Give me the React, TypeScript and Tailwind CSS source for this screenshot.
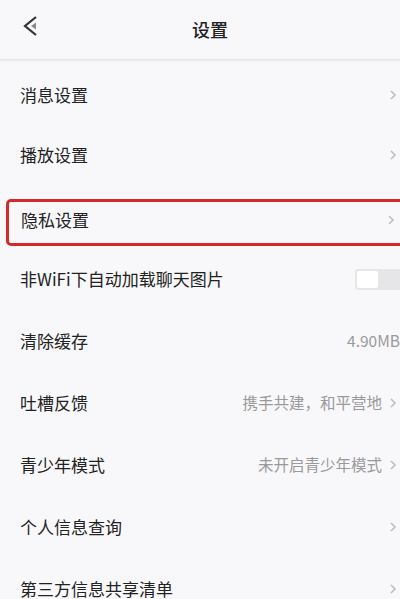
const font = { fontFamily: '"Noto Sans CJK SC", "Noto Sans", sans-serif' };

type Row = { label: string; value?: string; arrow?: boolean; toggle?: boolean; highlight?: boolean };

const rows: Row[] = [
  { label: "消息设置", arrow: true },
  { label: "播放设置", arrow: true },
  { label: "隐私设置", arrow: true, highlight: true },
  { label: "非WiFi下自动加载聊天图片", toggle: true },
  { label: "清除缓存", value: "4.90MB" },
  { label: "吐槽反馈", value: "携手共建，和平营地", arrow: true },
  { label: "青少年模式", value: "未开启青少年模式", arrow: true },
  { label: "个人信息查询", arrow: true },
  { label: "第三方信息共享清单", arrow: true },
];

function Chevron() {
  return (
    <svg width="8" height="12" viewBox="0 0 8 12" className="ml-[10px] shrink-0">
      <path d="M2 2l4 4-4 4" fill="none" stroke="#bdbdbd" strokeWidth="1.6" />
    </svg>
  );
}

export default function App() {
  return (
    <div className="h-[599px] w-[400px] overflow-hidden bg-[#f8f8fa] text-[#222]" style={font}>
      <header className="relative flex h-[59px] items-center justify-center pl-[20px]">
        <svg width="18" height="22" viewBox="0 0 18 22" className="absolute left-[22px] top-[15px]">
          <path d="M14 2L3 11l11 9" fill="none" stroke="#333" strokeWidth="2.2" />
          <path d="M14 7.5l-5 3.5 5 3.5z" fill="#8a8a8a" />
        </svg>
        <span className="text-[18px] font-medium">设置</span>
      </header>
      <div className="h-[3px] bg-gradient-to-b from-[#e2e2e4] to-[#f8f8fa]" />
      <main>
        {rows.map((r, i) => (
          <div key={i} className={`flex h-[62px] items-center ${i === 0 ? "pt-[4px]" : ""}`}>
            {r.highlight ? (
              <div className="ml-[6px] -mr-[10px] mt-[10px] flex h-[47px] flex-1 items-center rounded-[5px] border-[3px] border-[#d42a2a] pb-[5px] pl-[12px] pr-[12px]">
                <span className="flex-1 text-[17px]">{r.label}</span>
                <Chevron />
              </div>
            ) : (
              <div className="flex flex-1 items-center pl-[20px] pr-[3px]">
                <span className="flex-1 text-[17px]">{r.label}</span>
                {r.value && <span className="-mr-[3px] text-[15.5px] text-[#9a9a9a]">{r.value}</span>}
                {r.arrow && <Chevron />}
                {r.toggle && (
                  <div className="-mr-[3px] flex h-[21px] w-[45px] items-center rounded-l-[3px] bg-[#e6e6e8] pl-[2px]">
                    <div className="h-[17px] w-[21px] rounded-[2px] bg-white" />
                  </div>
                )}
              </div>
            )}
          </div>
        ))}
      </main>
    </div>
  );
}
